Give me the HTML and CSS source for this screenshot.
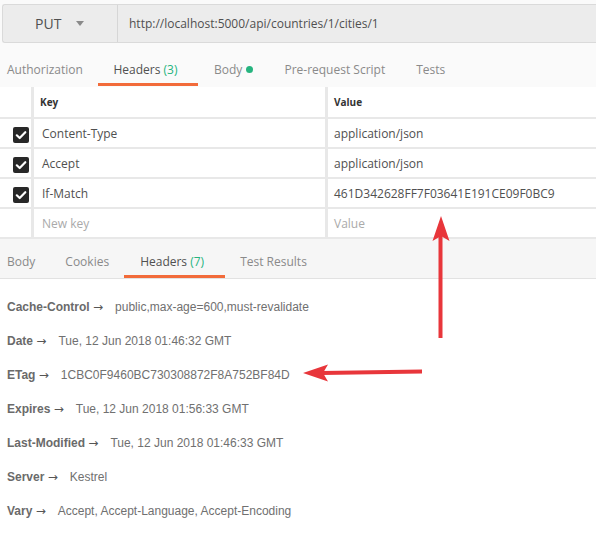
FILE: index.html
```
<!DOCTYPE html>
<html>
<head>
<meta charset="utf-8">
<link rel="stylesheet" href="styles.css">
</head>
<body>
<div class="page">
  <div class="reqbar">
    <div class="method"><span class="method-name">PUT</span><span class="caret"></span></div>
    <div class="url">http://localhost:5000/api/countries/1/cities/1</div>
  </div>

  <div class="tabs req-tabs">
    <div class="tab first">Authorization</div>
    <div class="tab active">Headers <span class="count">(3)</span></div>
    <div class="tab">Body <span class="dot"></span></div>
    <div class="tab">Pre-request Script</div>
    <div class="tab">Tests</div>
  </div>

  <div class="table">
    <div class="row head">
      <div class="cell check"></div>
      <div class="cell key">Key</div>
      <div class="cell val">Value</div>
    </div>
    <div class="row">
      <div class="cell check"><span class="box"><svg viewBox="0 0 16 16" width="16" height="16"><path d="M3.8 8.3 L6.7 11 L12.3 5.2" fill="none" stroke="#fff" stroke-width="2.2" stroke-linecap="round" stroke-linejoin="round"/></svg></span></div>
      <div class="cell key">Content-Type</div>
      <div class="cell val">application/json</div>
    </div>
    <div class="row">
      <div class="cell check"><span class="box"><svg viewBox="0 0 16 16" width="16" height="16"><path d="M3.8 8.3 L6.7 11 L12.3 5.2" fill="none" stroke="#fff" stroke-width="2.2" stroke-linecap="round" stroke-linejoin="round"/></svg></span></div>
      <div class="cell key">Accept</div>
      <div class="cell val">application/json</div>
    </div>
    <div class="row">
      <div class="cell check"><span class="box"><svg viewBox="0 0 16 16" width="16" height="16"><path d="M3.8 8.3 L6.7 11 L12.3 5.2" fill="none" stroke="#fff" stroke-width="2.2" stroke-linecap="round" stroke-linejoin="round"/></svg></span></div>
      <div class="cell key">If-Match</div>
      <div class="cell val">461D342628FF7F03641E191CE09F0BC9</div>
    </div>
    <div class="row">
      <div class="cell check"></div>
      <div class="cell key placeholder">New key</div>
      <div class="cell val placeholder">Value</div>
    </div>
  </div>

  <div class="resp">
    <div class="tabs resp-tabs">
      <div class="tab first">Body</div>
      <div class="tab">Cookies</div>
      <div class="tab active">Headers <span class="count">(7)</span></div>
      <div class="tab">Test Results</div>
    </div>
    <div class="hlist">
      <div class="hrow"><span class="hkey">Cache-Control <span class="arr">→</span></span><span class="hval">public,max-age=600,must-revalidate</span></div>
      <div class="hrow"><span class="hkey">Date <span class="arr">→</span></span><span class="hval">Tue, 12 Jun 2018 01:46:32 GMT</span></div>
      <div class="hrow"><span class="hkey">ETag <span class="arr">→</span></span><span class="hval">1CBC0F9460BC730308872F8A752BF84D</span></div>
      <div class="hrow"><span class="hkey">Expires <span class="arr">→</span></span><span class="hval">Tue, 12 Jun 2018 01:56:33 GMT</span></div>
      <div class="hrow"><span class="hkey">Last-Modified <span class="arr">→</span></span><span class="hval">Tue, 12 Jun 2018 01:46:33 GMT</span></div>
      <div class="hrow"><span class="hkey">Server <span class="arr">→</span></span><span class="hval">Kestrel</span></div>
      <div class="hrow"><span class="hkey">Vary <span class="arr">→</span></span><span class="hval">Accept, Accept-Language, Accept-Encoding</span></div>
    </div>
  </div>

  <svg class="annot" width="596" height="534" viewBox="0 0 596 534">
    <line x1="440.5" y1="338" x2="440.5" y2="236" stroke="#e8363b" stroke-width="4"/>
    <polygon points="441,216 449.5,241 441,236 432.5,241" fill="#e8363b"/>
    <line x1="422" y1="371.5" x2="322" y2="373" stroke="#e8363b" stroke-width="4"/>
    <polygon points="303,373 328,364.5 323,373 328,381.5" fill="#e8363b"/>
  </svg>
</div>
</body>
</html>
```

FILE: styles.css
```
html, body {
  margin: 0;
  padding: 0;
}
body {
  background: #fafafa;
  font-family: "Open Sans", "Liberation Sans", sans-serif;
  font-size: 12px;
  color: #505050;
}
.page {
  position: relative;
  width: 596px;
  height: 534px;
  overflow: hidden;
  display: flex;
  flex-direction: column;
}
.reqbar {
  display: flex;
  flex: none;
  margin: 4px 0 0 2px;
  height: 37px;
  border: 1px solid #dadada;
  border-right: none;
  border-radius: 3px 0 0 3px;
  background: #ececec;
}
.method {
  width: 115px;
  flex: none;
  display: flex;
  align-items: center;
  padding-left: 32px;
  box-sizing: border-box;
  border-right: 1px solid #d6d6d6;
}
.method-name {
  font-size: 14px;
  color: #505050;
}
.caret {
  margin-left: 15px;
  width: 0;
  height: 0;
  border-left: 4px solid transparent;
  border-right: 4px solid transparent;
  border-top: 5px solid #8a8a8a;
}
.url {
  display: flex;
  align-items: center;
  padding-left: 11px;
  font-size: 12px;
  color: #505050;
}
.tabs {
  display: flex;
  flex: none;
}
.req-tabs {
  margin-top: 12px;
  height: 31px;
  background: #fafafa;
}
.tab {
  display: flex;
  align-items: center;
  padding: 0 15.5px;
  color: #8a8a8a;
  font-size: 12px;
  border-bottom: 3px solid transparent;
  white-space: pre;
}
.tab.first {
  padding-left: 7px;
}
.tab.active {
  color: #505050;
  border-bottom-color: #f26b3a;
}
.req-tabs .tab.active {
  padding-left: 15px;
  padding-right: 21px;
}
.count {
  color: #26b47f;
}
.dot {
  display: inline-block;
  width: 7px;
  height: 7px;
  border-radius: 50%;
  background: #26b47f;
  margin-left: 1px;
}
.table {
  flex: none;
  margin-top: 1px;
  background: #fff;
}
.row {
  display: flex;
  height: 28px;
  border-bottom: 2px solid #e8e8e8;
}
.row.head {
  height: 30px;
}
.cell {
  display: flex;
  align-items: center;
  box-sizing: border-box;
}
.check {
  width: 31px;
  flex: none;
  justify-content: flex-end;
  padding-right: 2px;
  padding-top: 4px;
}
.key {
  width: 294px;
  flex: none;
  border-left: 3px solid #e8e8e8;
  padding-left: 8px;
}
.val {
  flex: 1;
  border-left: 3px solid #e8e8e8;
  padding-left: 6px;
}
.head .cell {
  font-size: 10px;
  font-weight: bold;
  color: #333;
}
.head .key {
  padding-left: 6px;
}
.placeholder {
  color: #aaaaaa;
}
.box {
  display: block;
  width: 16px;
  height: 16px;
  border-radius: 2px;
  background: #282828;
}
.box svg {
  display: block;
}
.resp {
  flex: 1;
  background: #fff;
}
.resp-tabs {
  height: 31px;
  padding-top: 8px;
  background: #f6f6f6;
  border-bottom: 1px solid #e2e2e2;
}
.resp-tabs .tab {
  padding: 0 15px;
}
.resp-tabs .tab.first {
  padding-left: 7px;
}
.resp-tabs .tab.active {
  padding: 0 21px 0 16px;
}
.hlist {
  padding-top: 11px;
  font-family: "Liberation Sans", Arial, sans-serif;
  font-size: 12px;
}
.hrow {
  height: 34px;
  display: flex;
  align-items: center;
  padding-left: 7px;
}
.hkey {
  font-weight: bold;
  color: #6a6a6a;
  margin-right: 12px;
}
.arr {
  font-family: "DejaVu Sans", sans-serif;
  font-weight: normal;
  font-size: 12px;
  color: #555;
}
.hval {
  color: #707070;
}
.annot {
  position: absolute;
  left: 0;
  top: 0;
  pointer-events: none;
}
```
